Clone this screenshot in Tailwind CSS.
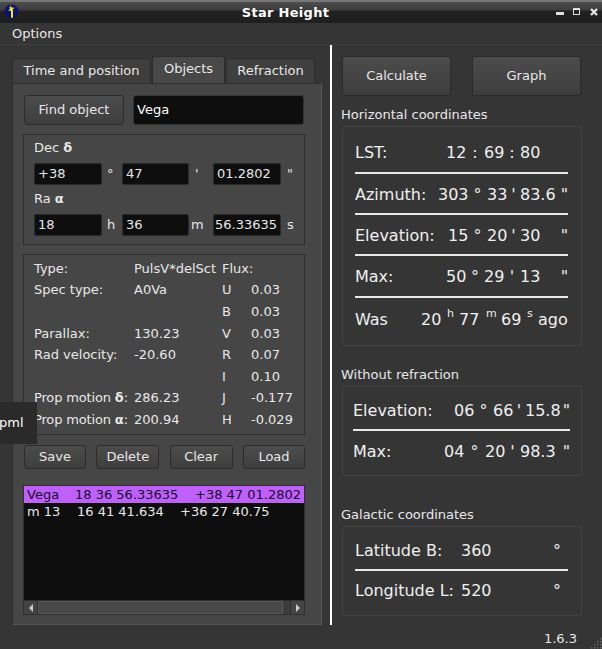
<!DOCTYPE html>
<html>
<head>
<meta charset="utf-8">
<script src="https://cdn.jsdelivr.net/npm/@tailwindcss/browser@4"></script>
</head>
<body class="m-0 overflow-hidden">
<div class="relative w-[602px] h-[649px] overflow-hidden bg-[#353535] text-[#e8e8e8] text-[13px] leading-[16px] font-['DejaVu_Sans',sans-serif]">
  <!-- title bar -->
  <div class="relative h-[23px] flex items-center justify-center border-t-2 border-[#777] bg-[linear-gradient(#4c4c4c_0,#3c3c3c_8px,#222_9px,#1e1e1e_100%)]">
    <svg class="absolute left-[4px] top-[2px]" width="15" height="15" viewBox="0 0 15 15"><circle cx="7.5" cy="7.5" r="7" fill="#0c1272"/><path d="M6.6 1 L7.6 3.6 L10.6 3.8 L8.6 5.4 L9 6.6 L9 13.8 L7 13.8 L7 7 L4.2 6.6 L6.2 4.8 L4.6 3.6 L6.2 3.4 Z" fill="#f0e818"/></svg>
    <span class="ml-[-31px] font-bold text-[13px] tracking-[0.3px] text-white">Star Height</span>
    <div class="absolute left-[556px] top-[10px] w-[8px] h-[3px] bg-[#e0e0e0]"></div>
    <div class="absolute left-[573px] top-[6px] w-[7px] h-[7px] border border-t-2 border-[#e0e0e0]"></div>
    <svg class="absolute left-[590px] top-[6px]" width="8" height="8" viewBox="0 0 8 8"><path d="M1 1 L7 7 M7 1 L1 7" stroke="#e0e0e0" stroke-width="2.4"/></svg>
  </div>
  <!-- menu -->
  <div class="h-[22px] flex items-center pl-[12px] border-b border-[#3e3e3e] text-[#e8e8e8]">Options</div>
  <div class="flex">
    <!-- left column -->
    <div class="w-[330px] shrink-0 pl-[12px] pt-[11px]">
      <div class="flex h-[27px] items-end gap-[1px]">
        <div class="w-[139px] h-[25px] flex items-center justify-center rounded-t-[3px] border border-b-0 border-[#2c2c2c] bg-[#3f3f3f]">Time and position</div>
        <div class="w-[73px] h-[27px] pb-[2px] flex items-center justify-center rounded-t-[3px] border border-b-0 border-[#2c2c2c] bg-[#484848]">Objects</div>
        <div class="w-[89px] h-[25px] flex items-center justify-center rounded-t-[3px] border border-b-0 border-[#2c2c2c] bg-[#3f3f3f]">Refraction</div>
      </div>
      <div class="w-[310px] h-[542px] border border-[#565656] border-t-[#2e2e2e] border-l-[#2e2e2e] bg-[#464646] pl-[10px] pt-[11px]">
        <div class="flex gap-[9px] h-[30px] ml-[1px]">
          <div class="w-[100px] flex items-center justify-center rounded-[3px] border border-[#2c2c2c] bg-[linear-gradient(#4c4c4c,#3e3e3e)]">Find object</div>
          <div class="w-[171px] flex items-center pl-[3px] rounded-[3px] border border-[#333] bg-[#0e0e0e] text-white">Vega</div>
        </div>
        <!-- dec ra -->
        <div class="mt-[9px] w-[282px] h-[111px] border border-[#2e2e2e] pl-[10px] pt-[5px]">
          <div class="h-[16px]">Dec <b>δ</b></div>
          <div class="mt-[7px] grid grid-cols-[68px_20px_67px_24px_68px_20px] h-[22px] items-center">
            <div class="h-[22px] flex items-center pl-[3px] rounded-[2px] border border-[#2a2a2a] bg-[#0e0e0e]">+38</div><div class="pl-[5px]">°</div>
            <div class="h-[22px] flex items-center pl-[3px] rounded-[2px] border border-[#2a2a2a] bg-[#0e0e0e]">47</div><div class="pl-[6px]">'</div>
            <div class="h-[22px] flex items-center pl-[3px] rounded-[2px] border border-[#2a2a2a] bg-[#0e0e0e]">01.2802</div><div class="pl-[6px]">"</div>
          </div>
          <div class="mt-[6px] h-[16px]">Ra <b>α</b></div>
          <div class="mt-[7px] grid grid-cols-[68px_20px_67px_24px_68px_20px] h-[22px] items-center">
            <div class="h-[22px] flex items-center pl-[3px] rounded-[2px] border border-[#2a2a2a] bg-[#0e0e0e]">18</div><div class="pl-[5px]">h</div>
            <div class="h-[22px] flex items-center pl-[3px] rounded-[2px] border border-[#2a2a2a] bg-[#0e0e0e]">36</div><div class="pl-[2px]">m</div>
            <div class="h-[22px] flex items-center pl-[1px] rounded-[2px] border border-[#2a2a2a] bg-[#0e0e0e]">56.33635</div><div class="pl-[6px]">s</div>
          </div>
        </div>
        <!-- info -->
        <div class="mt-[9px] w-[282px] h-[181px] border border-[#2e2e2e] pl-[10px] pt-[3px]">
          <div class="grid grid-cols-[100px_88px_29px_1fr] auto-rows-[21.6px] items-center">
            <div>Type:</div><div>PulsV*delSct</div><div class="col-span-2">Flux:</div>
            <div>Spec type:</div><div>A0Va</div><div>U</div><div>0.03</div>
            <div></div><div></div><div>B</div><div>0.03</div>
            <div>Parallax:</div><div>130.23</div><div>V</div><div>0.03</div>
            <div>Rad velocity:</div><div>-20.60</div><div>R</div><div>0.07</div>
            <div></div><div></div><div>I</div><div>0.10</div>
            <div class="whitespace-nowrap tracking-[-0.15px]">Prop motion <b>δ</b>:</div><div>286.23</div><div>J</div><div>-0.177</div>
            <div class="whitespace-nowrap tracking-[-0.15px]">Prop motion <b>α</b>:</div><div>200.94</div><div>H</div><div>-0.029</div>
          </div>
        </div>
        <!-- buttons -->
        <div class="mt-[10px] ml-[1px] flex h-[24px] w-[281px] justify-between">
          <div class="w-[62px] flex items-center justify-center rounded-[3px] border border-[#2c2c2c] bg-[linear-gradient(#4c4c4c,#3e3e3e)]">Save</div>
          <div class="w-[63px] flex items-center justify-center rounded-[3px] border border-[#2c2c2c] bg-[linear-gradient(#4c4c4c,#3e3e3e)]">Delete</div>
          <div class="w-[63px] flex items-center justify-center rounded-[3px] border border-[#2c2c2c] bg-[linear-gradient(#4c4c4c,#3e3e3e)]">Clear</div>
          <div class="w-[62px] flex items-center justify-center rounded-[3px] border border-[#2c2c2c] bg-[linear-gradient(#4c4c4c,#3e3e3e)]">Load</div>
        </div>
        <!-- list -->
        <div class="mt-[16px] w-[282px] h-[130px] border border-[#2e2e2e] bg-[#0e0e0e] flex flex-col">
          <div class="h-[17px] flex items-center bg-[#c060fb] text-[#14082a] whitespace-pre pl-[3px]"><span class="w-[48px]">Vega</span><span class="w-[120px]">18 36 56.33635</span><span>+38 47 01.2802</span></div>
          <div class="h-[17px] flex items-center whitespace-pre pl-[3px]"><span class="w-[49px]">m 13</span><span class="w-[104px] pl-[1px]">16 41 41.634</span><span>+36 27 40.75</span></div>
          <div class="flex-1"></div>
          <div class="h-[14px] flex border-t border-[#2e2e2e] bg-[#3c3c3c]">
            <div class="w-[14px] flex items-center justify-center border-r border-[#2e2e2e] bg-[#444]"><svg width="6" height="8" viewBox="0 0 6 8"><path d="M5 0 V8 L1 4 Z" fill="#ccc"/></svg></div>
            <div class="w-[245px] bg-[#484848] border border-[#5a5a5a] rounded-[1px]"></div>
            <div class="flex-1"></div>
            <div class="w-[14px] flex items-center justify-center border-l border-[#2e2e2e] bg-[#444]"><svg width="6" height="8" viewBox="0 0 6 8"><path d="M1 0 V8 L5 4 Z" fill="#ccc"/></svg></div>
          </div>
        </div>
      </div>
    </div>
    <!-- divider -->
    <div class="w-[2px] h-[580px] bg-white shrink-0"></div>
    <!-- right column -->
    <div class="pl-[10px] pt-[11px] w-[270px]">
      <div class="flex gap-[21px] h-[40px]">
        <div class="w-[109px] flex items-center justify-center rounded-[3px] border border-[#2a2a2a] bg-[linear-gradient(#4c4c4c,#3e3e3e)]">Calculate</div>
        <div class="w-[109px] flex items-center justify-center rounded-[3px] border border-[#2a2a2a] bg-[linear-gradient(#4c4c4c,#3e3e3e)]">Graph</div>
      </div>
      <div class="mt-[11px] -ml-[1px] h-[16px]">Horizontal coordinates</div>
      <div class="mt-[3px] w-[240px] h-[220px] border border-[#444] rounded-[3px] pl-[12px] pt-[5px] text-[16px] leading-[18px] text-[#f0f0f0]">
        <div class="w-[213px] h-[42px] pt-[2px] grid grid-cols-[91px_20px_18px_20px_16px_20px_28px] items-center border-b-2 border-[#e8e8e8] whitespace-nowrap"><div>LST:</div><div>12</div><div class="text-center">:</div><div>69</div><div class="text-center">:</div><div>80</div><div></div></div>
        <div class="w-[213px] h-[41px] pt-[2px] grid grid-cols-[83px_30px_19px_20px_13px_35px_13px] items-center border-b-2 border-[#e8e8e8] whitespace-nowrap"><div>Azimuth:</div><div>303</div><div class="text-center">°</div><div>33</div><div class="text-center">'</div><div>83.6</div><div class="text-right">"</div></div>
        <div class="w-[213px] h-[41px] pt-[2px] grid grid-cols-[93px_20px_19px_20px_13px_35px_13px] items-center border-b-2 border-[#e8e8e8] whitespace-nowrap"><div>Elevation:</div><div>15</div><div class="text-center">°</div><div>20</div><div class="text-center">'</div><div>30</div><div class="text-right">"</div></div>
        <div class="w-[213px] h-[42px] pt-[2px] grid grid-cols-[91px_20px_18px_20px_16px_35px_13px] items-center border-b-2 border-[#e8e8e8] whitespace-nowrap"><div>Max:</div><div>50</div><div class="text-center">°</div><div>29</div><div class="text-center">'</div><div>13</div><div class="text-right">"</div></div>
        <div class="w-[213px] h-[41px] pt-[2px] grid grid-cols-[66px_26px_12px_27px_15px_26px_11px_30px] items-center whitespace-nowrap"><div>Was</div><div>20</div><div class="text-[11px] leading-[11px] mb-[12px]">h</div><div>77</div><div class="text-[11px] leading-[11px] mb-[12px]">m</div><div>69</div><div class="text-[11px] leading-[11px] mb-[12px]">s</div><div>ago</div></div>
      </div>
      <div class="mt-[21px] -ml-[1px] h-[16px]">Without refraction</div>
      <div class="mt-[3px] w-[240px] h-[90px] border border-[#444] rounded-[3px] pl-[10px] pt-[3px] text-[16px] leading-[18px] text-[#f0f0f0]">
        <div class="w-[217px] h-[41px] pt-[2px] grid grid-cols-[101px_20px_19px_20px_12px_37px_8px] items-center border-b-2 border-[#e8e8e8] whitespace-nowrap"><div>Elevation:</div><div>06</div><div class="text-center">°</div><div>66</div><div class="text-center">'</div><div>15.8</div><div class="text-right">"</div></div>
        <div class="w-[217px] h-[41px] grid grid-cols-[91px_20px_21px_20px_15px_35px_15px] items-center whitespace-nowrap"><div>Max:</div><div>04</div><div class="text-center">°</div><div>20</div><div class="text-center">'</div><div>98.3</div><div class="text-right">"</div></div>
      </div>
      <div class="mt-[31px] -ml-[1px] h-[16px]">Galactic coordinates</div>
      <div class="mt-[3px] w-[240px] h-[90px] border border-[#444] rounded-[3px] pl-[12px] pt-[3px] text-[16px] leading-[18px] text-[#f0f0f0]">
        <div class="w-[213px] h-[41px] pt-[2px] grid grid-cols-[106px_92px_15px] items-center border-b-2 border-[#e8e8e8] whitespace-nowrap"><div>Latitude B:</div><div>360</div><div>°</div></div>
        <div class="w-[213px] h-[38px] pt-[1px] grid grid-cols-[106px_92px_15px] items-center whitespace-nowrap"><div>Longitude L:</div><div>520</div><div>°</div></div>
      </div>
      <div class="mt-[15px] w-[235px] text-right h-[16px]">1.6.3</div>
    </div>
  </div>
  <!-- tooltip -->
  <div class="absolute left-0 top-[402px] w-[37px] h-[42px] bg-[#2a2a2a] text-white flex items-center overflow-hidden whitespace-nowrap z-10"><span class="-ml-[1px]">pml</span></div>
  <!-- resize grip -->
  <svg class="absolute right-0 bottom-0" width="12" height="12" viewBox="0 0 12 12" fill="#666"><rect x="10" y="1" width="1.5" height="1.5"/><rect x="7" y="4" width="1.5" height="1.5"/><rect x="10" y="4" width="1.5" height="1.5"/><rect x="4" y="7" width="1.5" height="1.5"/><rect x="7" y="7" width="1.5" height="1.5"/><rect x="10" y="7" width="1.5" height="1.5"/><rect x="1" y="10" width="1.5" height="1.5"/><rect x="4" y="10" width="1.5" height="1.5"/><rect x="7" y="10" width="1.5" height="1.5"/><rect x="10" y="10" width="1.5" height="1.5"/></svg>
</div>
</body>
</html>
